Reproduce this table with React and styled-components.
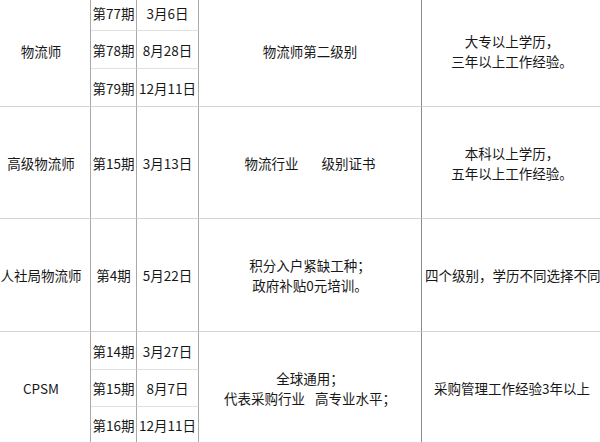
import React from "react";
import styled, { createGlobalStyle } from "styled-components";

const GlobalStyle = createGlobalStyle`
  html, body {
    margin: 0;
    padding: 0;
    background: #ffffff;
  }
  body {
    width: 600px;
    height: 442px;
    overflow: hidden;
  }
`;

const sub_rows = ["36px", "38px", "38px", "112px", "113px", "38px", "37px", "37px"];

const Page = styled.div`
  width: 600px;
  height: 442px;
  overflow: hidden;
  background: #fff;
  font-family: "Noto Sans CJK SC", "Noto Sans", sans-serif;
  font-size: 13.5px;
  color: #171717;
`;

const Sheet = styled.div`
  display: grid;
  grid-template-columns: 99px 46px 62px 223px 181px;
  grid-template-rows: ${sub_rows.join(" ")};
  margin: -5px 0 0 -8px;
  width: 611px;
`;

const Cell = styled.div`
  box-sizing: border-box;
  grid-column: ${(p) => p.$col};
  grid-row: ${(p) => p.$row} / span ${(p) => p.$span || 1};
  display: flex;
  flex-direction: column;
  align-items: ${(p) => (p.$start ? "flex-start" : "center")};
  justify-content: center;
  text-align: center;
  line-height: 20px;
  padding: 0 ${(p) => (p.$start ? "3px" : "0")};
  border-bottom: 1px solid ${(p) => (p.$sub ? "#e0e0e0" : "#d4d4d4")};
  border-right: 1px solid ${(p) => p.$line || "#a9a9a9"};
  white-space: nowrap;
  overflow: hidden;
`;

const Gap = styled.span`
  display: inline-block;
  width: ${(p) => p.$w}px;
`;

const dark = "#8c8c8c";

const groups = [
  {
    name: "物流师",
    sessions: [
      ["第77期", "3月6日"],
      ["第78期", "8月28日"],
      ["第79期", "12月11日"],
    ],
    desc: ["物流师第二级别"],
    need: ["大专以上学历，", "三年以上工作经验。"],
  },
  {
    name: "高级物流师",
    sessions: [["第15期", "3月13日"]],
    desc: [
      <span key="a">
        物流行业
        <Gap $w={23} />
        级别证书
      </span>,
    ],
    need: ["本科以上学历，", "五年以上工作经验。"],
  },
  {
    name: "人社局物流师",
    sessions: [["第4期", "5月22日"]],
    desc: ["积分入户紧缺工种；", "政府补贴0元培训。"],
    need: ["四个级别，学历不同选择不同级别"],
    overflow: true,
  },
  {
    name: "CPSM",
    sessions: [
      ["第14期", "3月27日"],
      ["第15期", "8月7日"],
      ["第16期", "12月11日"],
    ],
    desc: [
      "全球通用；",
      <span key="b">
        代表采购行业
        <Gap $w={10} />
        高专业水平；
      </span>,
    ],
    need: ["采购管理工作经验3年以上"],
  },
];

function Group({ group, row }) {
  const span = group.sessions.length;
  return (
    <>
      <Cell $col={1} $row={row} $span={span}>
        {group.name}
      </Cell>
      {group.sessions.map(([no, date], i) => (
        <React.Fragment key={no}>
          <Cell $col={2} $row={row + i} $sub={i < span - 1}>
            {no}
          </Cell>
          <Cell $col={3} $row={row + i} $sub={i < span - 1}>
            {date}
          </Cell>
        </React.Fragment>
      ))}
      <Cell $col={4} $row={row} $span={span} $line={dark}>
        {group.desc.map((line, i) => (
          <div key={i}>{line}</div>
        ))}
      </Cell>
      <Cell $col={5} $row={row} $span={span} $line={dark} $start={group.overflow}>
        {group.need.map((line, i) => (
          <div key={i}>{line}</div>
        ))}
      </Cell>
    </>
  );
}

function App() {
  let row = 1;
  const placed = groups.map((g) => {
    const start = row;
    row += g.sessions.length;
    return <Group key={g.name} group={g} row={start} />;
  });
  return (
    <Page>
      <GlobalStyle />
      <Sheet>{placed}</Sheet>
    </Page>
  );
}

export default App;
